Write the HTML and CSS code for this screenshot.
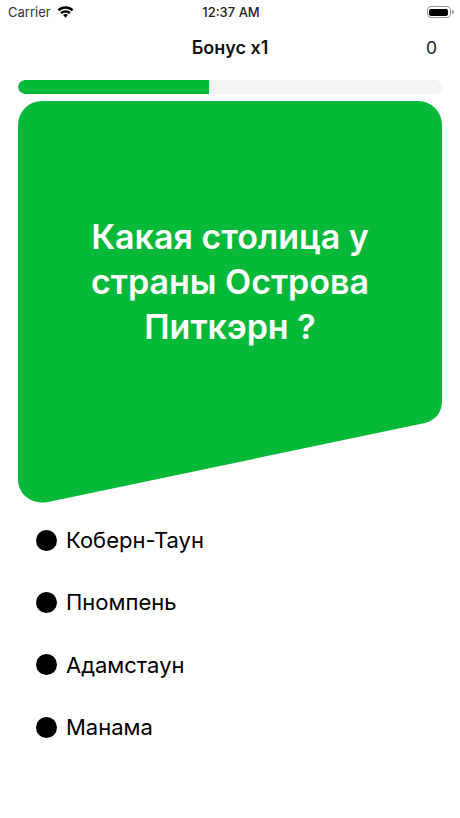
FILE: index.html
```html
<!DOCTYPE html>
<html lang="ru">
<head>
  <meta charset="UTF-8" />
  <title>Викторина</title>
  <link rel="stylesheet" href="styles.css">
</head>
<body>
  <div class="status-bar">
    <div class="status-left">
      <span>Carrier</span>
      <svg class="wifi" viewBox="0 0 18 13" width="17" height="13">
        <path d="M9 2.6c2.500 0 4.800 1 6.500 2.700l1.900-2C15.200 1.100 12.300 0 9 0S2.800 1.100.6 3.300l1.900 2C4.200 3.600 6.500 2.600 9 2.600z"/>
        <path d="M9 6.700c1.400 0 2.700.5 3.700 1.500l1.900-2C13.100 4.800 11.200 4 9 4S4.900 4.800 3.400 6.200l1.900 2c1-1 2.300-1.500 3.700-1.500z"/>
        <path d="M9 8.200c-1 0-1.900.4-2.500 1L9 12l2.500-2.800c-.6-.6-1.500-1-2.500-1z"/>
      </svg>
    </div>
    <div class="status-time">12:37 AM</div>
    <div class="status-right">
      <div class="battery"><div class="battery-fill"></div></div>
      <div class="battery-cap"></div>
    </div>
  </div>

  <div class="nav-bar">
    <div class="nav-title">Бонус x1</div>
    <div class="nav-score">0</div>
  </div>

  <div class="progress">
    <div class="progress-fill" style="width: 45%"></div>
  </div>

  <div class="card">
    <svg class="card-shape" viewBox="0 0 424 404" width="424" height="404">
      <path d="M24 0H400A24 24 0 0 1 424 24V300C424 312 417 319 407 322L30 401C14 404 0 394 0 378V24A24 24 0 0 1 24 0Z"/>
    </svg>
    <h1 class="question">Какая столица у страны Острова Питкэрн ?</h1>
  </div>

  <ul class="answers">
    <li class="answer"><span class="dot"></span>Коберн-Таун</li>
    <li class="answer"><span class="dot"></span>Пномпень</li>
    <li class="answer"><span class="dot"></span>Адамстаун</li>
    <li class="answer"><span class="dot"></span>Манама</li>
  </ul>
</body>
</html>
```

FILE: styles.css
```css
body {
  margin: 0;
  width: 460px;
  height: 818px;
  overflow: hidden;
  background-color: #ffffff;
  color: #000000;
  font-family: Inter, "Liberation Sans", sans-serif;
}
.status-bar {
  display: flex;
  justify-content: space-between;
  align-items: center;
  height: 24px;
  padding: 0 6px 0 8px;
  font-size: 13px;
}
.status-left {
  display: flex;
  align-items: center;
  gap: 6px;
  width: 120px;
  color: #333333;
}
.wifi {
  fill: #000000;
}
.status-time {
  font-weight: 500;
  color: #222222;
}
.status-right {
  display: flex;
  align-items: center;
  justify-content: flex-end;
  width: 120px;
}
.battery {
  width: 24px;
  height: 12px;
  padding: 1.5px;
  border: 1px solid #999999;
  border-radius: 4px;
  box-sizing: border-box;
}
.battery-fill {
  height: 100%;
  background-color: #000000;
  border-radius: 2px;
}
.battery-cap {
  width: 2px;
  height: 4px;
  margin-left: 1px;
  background-color: #999999;
  border-radius: 0 2px 2px 0;
}
.nav-bar {
  position: relative;
  display: flex;
  justify-content: center;
  align-items: center;
  height: 47px;
  font-size: 18px;
}
.nav-title {
  font-weight: 600;
  color: #111111;
}
.nav-score {
  position: absolute;
  right: 23px;
  font-size: 17.500px;
  color: #222222;
}
.progress {
  height: 14px;
  margin: 9px 18px 0;
  background-color: #f4f4f4;
  border-radius: 7px;
  overflow: hidden;
}
.progress-fill {
  height: 100%;
  background-color: #07b939;
  border-radius: 7px 0 0 7px;
}
.card {
  position: relative;
  width: 424px;
  height: 404px;
  margin: 7px 18px 0;
}
.card-shape {
  position: absolute;
  top: 0;
  left: 0;
  fill: #07b939;
}
.question {
  position: relative;
  margin: 0;
  padding: 113px 60px 0;
  color: #ffffff;
  font-size: 34px;
  font-weight: 600;
  line-height: 45px;
  text-align: center;
}
.answers {
  list-style: none;
  margin: 4px 0 0;
  padding: 0 0 0 36px;
}
.answer {
  display: flex;
  align-items: center;
  gap: 9px;
  height: 62.300px;
  font-size: 22px;
}
.dot {
  width: 21px;
  height: 21px;
  background-color: #000000;
  border-radius: 50%;
}
```
